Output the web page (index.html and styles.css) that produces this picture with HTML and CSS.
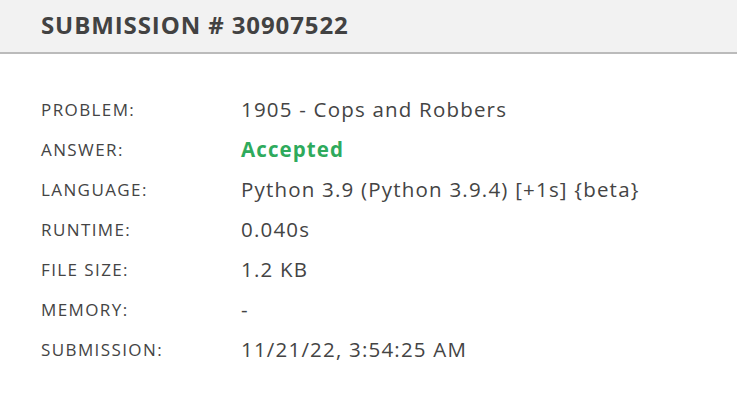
FILE: index.html
```html
<!DOCTYPE html>
<html>
<head>
<meta charset="utf-8">
<link rel="stylesheet" href="styles.css">
</head>
<body>
<div class="card">
  <div class="card-header">SUBMISSION # 30907522</div>
  <div class="card-body">
    <div class="info">
      <div class="label">PROBLEM:</div><div class="value">1905 - Cops and Robbers</div>
      <div class="label">ANSWER:</div><div class="value accepted">Accepted</div>
      <div class="label">LANGUAGE:</div><div class="value">Python 3.9 (Python 3.9.4) [+1s] {beta}</div>
      <div class="label">RUNTIME:</div><div class="value">0.040s</div>
      <div class="label">FILE SIZE:</div><div class="value">1.2 KB</div>
      <div class="label">MEMORY:</div><div class="value">-</div>
      <div class="label">SUBMISSION:</div><div class="value">11/21/22, 3:54:25 AM</div>
    </div>
  </div>
</div>
</body>
</html>
```
FILE: styles.css
```css
html, body {
  margin: 0;
  padding: 0;
  background: #fff;
}
body {
  font-family: "Open Sans", "Noto Sans", sans-serif;
  color: #444;
}
.card-header {
  height: 54px;
  box-sizing: border-box;
  background: #f2f2f2;
  border-bottom: 2px solid #bbb;
  padding: 0 41px 4px;
  display: flex;
  align-items: center;
  font-size: 24px;
  letter-spacing: 0.9px;
  font-weight: 700;
  color: #424242;
}
.card-body {
  padding: 35px 41px 0;
}
.info {
  display: grid;
  grid-template-columns: 200px auto;
  grid-auto-rows: 40px;
  align-items: center;
}
.label {
  font-size: 17px;
  letter-spacing: 1.4px;
  color: #444;
}
.value {
  font-size: 20.5px;
  letter-spacing: 1.2px;
  color: #444;
}
.accepted {
  color: #2eaa5c;
  font-weight: 700;
  letter-spacing: 1.1px;
}
```
